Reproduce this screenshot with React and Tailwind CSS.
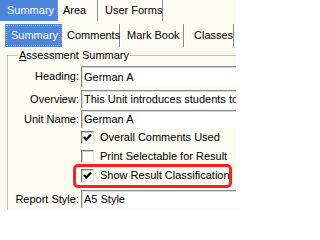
import React from "react";

function Sep() {
  return <div className="w-[2px] shrink-0 self-stretch border-l border-l-[#8a8a8a] border-r border-r-white" />;
}

function Tab({ label, width, pad, active = false, focus = false }) {
  return (
    <div
      className={`relative shrink-0 flex items-center whitespace-nowrap ${width} ${pad} ${active ? "bg-[#4b86dc] text-white" : "text-black"}`}
    >
      {focus && <div className="absolute inset-[1px] border border-dotted border-[#f5a53a]" />}
      <span>{label}</span>
    </div>
  );
}

function Field({ label, value, className = "" }) {
  return (
    <div className={`flex items-stretch ${className}`}>
      <div className="w-[72px] shrink-0 flex items-center justify-end pr-[1px] whitespace-nowrap">{label}</div>
      <div className="flex-1 ml-[1px] bg-white border-t border-l border-[#8a8a8a] shadow-[inset_1px_1px_0_#d8d8d0] flex items-center pl-[2px] whitespace-nowrap overflow-hidden">
        {value}
      </div>
    </div>
  );
}

function Check({ label, checked }) {
  return (
    <div className="flex items-center h-[19px] pl-[73px]">
      <div className="w-[13px] h-[13px] shrink-0 bg-white border-t border-l border-[#7c7c7c] border-r border-b border-r-[#e8e8e0] border-b-[#e8e8e0] shadow-[inset_1px_1px_0_#c8c8c0] flex items-center justify-center">
        {checked && (
          <svg width="9" height="9" viewBox="0 0 9 9">
            <path d="M1 4 L3.2 6.6 L8 1.5" fill="none" stroke="#000" strokeWidth="2.2" />
          </svg>
        )}
      </div>
      <span className="ml-[6px] whitespace-nowrap">{label}</span>
    </div>
  );
}

export default function App() {
  return (
    <div className="w-[236px] h-[210px] relative overflow-hidden bg-[#fbfbf1] text-black text-[11px] leading-none font-['Liberation_Sans',Arial,sans-serif]">
      <div className="flex h-[21px]">
        <Tab label="Summary" width="w-[57px]" pad="pl-[7px]" active />
        <Sep />
        <Tab label="Area" width="w-[38px]" pad="pl-[4px]" />
        <Sep />
        <Tab label="User Forms" width="w-[63px]" pad="pl-[6px]" />
        <Sep />
      </div>

      <div className="flex h-[23px] mt-[3px] pl-[5px]">
        <Tab label="Summary" width="w-[56px]" pad="pl-[6px]" active focus />
        <Sep />
        <Tab label="Comments" width="w-[56px]" pad="pl-[4px]" />
        <Sep />
        <Tab label="Mark Book" width="w-[62px]" pad="pl-[6px]" />
        <Sep />
        <Tab label="Classes" width="w-[48px]" pad="pl-[9px]" />
        <Sep />
      </div>

      <div className="relative mt-[8px] ml-[7px] h-[200px] border-t border-l border-[#c4c4b4]">
        <div className="absolute -top-[6px] left-[10px] px-[1px] bg-[#fbfbf1] whitespace-nowrap">
          <span className="underline">A</span>ssessment Summary
        </div>

        <Field label="Heading:" value="German A" className="mt-[10px] h-[21px]" />
        <Field label="Overview:" value="This Unit introduces students to" className="mt-[3px] h-[18px]" />
        <Field label="Unit Name:" value="German A" className="mt-[2px] h-[18px]" />

        <Check label="Overall Comments Used" checked />
        <Check label="Print Selectable for Result" />
        <Check label="Show Result Classification" checked />

        <Field label="Report Style:" value="A5 Style" className="mt-[5px] h-[18px]" />
      </div>

      <div className="absolute left-[73px] top-[164px] w-[159px] h-[24px] border-[3px] border-[#ff1f1f] rounded-[5px]" />
    </div>
  );
}
